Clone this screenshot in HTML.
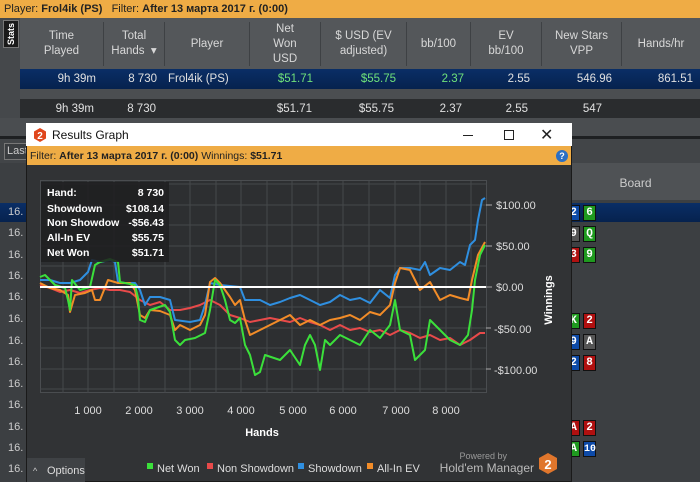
<!DOCTYPE html>
<html><head><meta charset="utf-8"><style>
*{margin:0;padding:0;box-sizing:border-box}
body{width:700px;height:482px;overflow:hidden;background:#3c3f42;font-family:"Liberation Sans","Noto Sans CJK SC",sans-serif;font-size:11px;color:#e0e0e0;position:relative}
.a{position:absolute}
.top{left:0;top:0;width:700px;height:18px;background:#efac45;color:#222;font-size:11px;line-height:18px;padding-left:4px}
.hdr{left:20px;top:18px;width:680px;height:51px;background:#54575a}
.hc{position:absolute;top:4px;height:44px;display:flex;align-items:center;justify-content:center;text-align:center;color:#d8d8d8;font-size:11.5px;line-height:15px;border-right:1px solid #3e4144}
.r1{left:20px;top:69px;width:680px;height:20px;background:linear-gradient(#0a2e66,#06224e);}
.r2{left:20px;top:99px;width:680px;height:19px;background:#2a2c2e}
.c{position:absolute;top:0;line-height:20px;font-size:11.5px;text-align:right}
.g{color:#6fe27a}
.card{position:absolute;width:13px;height:16px;border:1px solid #111;color:#fff;font:bold 11px "Liberation Mono",monospace;text-align:center;line-height:15px}
.left16{position:absolute;left:8px;font-size:11px;color:#ccc}
</style></head><body>
<div class="a top">Player: <b>Frol4ik (PS)</b>&nbsp;&nbsp; Filter: <b>After 13 марта 2017 г. (0:00)</b></div>
<div class="a" style="left:0;top:18px;width:20px;height:120px;background:#45484b"></div>
<div class="a" style="left:3px;top:20px;width:16px;height:28px;background:#1a1a1a;border:1px solid #777;color:#fff;font-size:9px;font-weight:bold;writing-mode:vertical-rl;transform:rotate(180deg);text-align:center;line-height:14px">Stats</div>
<div class="a hdr">
<div class="hc" style="left:0;width:84px">Time<br>Played</div>
<div class="hc" style="left:84px;width:61px">Total<br>Hands &nbsp;▾</div>
<div class="hc" style="left:145px;width:85px">Player</div>
<div class="hc" style="left:230px;width:71px">Net<br>Won<br>USD</div>
<div class="hc" style="left:301px;width:86px">$ USD (EV<br>adjusted)</div>
<div class="hc" style="left:387px;width:64px">bb/100</div>
<div class="hc" style="left:451px;width:71px">EV<br>bb/100</div>
<div class="hc" style="left:522px;width:80px">New Stars<br>VPP</div>
<div class="hc" style="left:602px;width:78px;border:none">Hands/hr</div>
</div>
<div class="a r1">
<span class="c" style="left:0;width:76px">9h 39m</span><span class="c" style="left:84px;width:53px">8 730</span><span class="c" style="left:148px">Frol4ik (PS)</span><span class="c g" style="left:230px;width:63px">$51.71</span><span class="c g" style="left:301px;width:75px">$55.75</span><span class="c g" style="left:387px;width:57px">2.37</span><span class="c" style="left:451px;width:59px">2.55</span><span class="c" style="left:522px;width:70px">546.96</span><span class="c" style="left:602px;width:71px">861.51</span>
</div>
<div class="a" style="left:20px;top:89px;width:680px;height:10px;background:#4b4e51"></div>
<div class="a r2">
<span class="c" style="left:0;width:74px">9h 39m</span><span class="c" style="left:84px;width:52px">8 730</span><span class="c" style="left:230px;width:62px">$51.71</span><span class="c" style="left:301px;width:73px">$55.75</span><span class="c" style="left:387px;width:55px">2.37</span><span class="c" style="left:451px;width:57px">2.55</span><span class="c" style="left:522px;width:60px">547</span>
</div>
<div class="a" style="left:0;top:118px;width:700px;height:18px;background:#4a4d50"></div>
<div class="a" style="left:0;top:136px;width:700px;height:3px;background:#1e2022"></div>
<div class="a" style="left:0;top:139px;width:700px;height:24px;background:#424548"></div>
<div class="a" style="left:4px;top:143px;width:30px;height:17px;border:1px solid #777;background:#3a3d40;color:#ccc;font-size:11px;line-height:15px;padding-left:2px">Last</div>
<div class="a" style="left:571px;top:163px;width:129px;height:37px;background:#4f5255;color:#ccc;font-size:12px;text-align:center;line-height:40px">Board</div>
<div class="a" style="left:0;top:203px;width:700px;height:19px;background:linear-gradient(#0a2e66,#06224e)"></div>
<div class="left16" style="top:206px">16.</div><div class="left16" style="top:227px">16.</div><div class="left16" style="top:249px">16.</div><div class="left16" style="top:270px">16.</div><div class="left16" style="top:291px">16.</div><div class="left16" style="top:313px">16.</div><div class="left16" style="top:335px">16.</div><div class="left16" style="top:356px">16.</div><div class="left16" style="top:378px">16.</div><div class="left16" style="top:399px">16.</div><div class="left16" style="top:421px">16.</div><div class="left16" style="top:442px">16.</div><div class="left16" style="top:463px">16.</div>
<div class="card" style="left:567px;top:205px;background:#0d4aa8">2</div><div class="card" style="left:583px;top:205px;background:#1f9a1f">6</div>
<div class="card" style="left:567px;top:226px;background:#555">9</div><div class="card" style="left:583px;top:226px;background:#1f9a1f">Q</div>
<div class="card" style="left:567px;top:247px;background:#b01010">3</div><div class="card" style="left:583px;top:247px;background:#1f9a1f">9</div>
<div class="card" style="left:567px;top:313px;background:#1f9a1f">K</div><div class="card" style="left:583px;top:313px;background:#b01010">2</div>
<div class="card" style="left:567px;top:334px;background:#0d4aa8">9</div><div class="card" style="left:583px;top:334px;background:#555">A</div>
<div class="card" style="left:567px;top:355px;background:#0d4aa8">2</div><div class="card" style="left:583px;top:355px;background:#b01010">8</div>
<div class="card" style="left:567px;top:420px;background:#b01010">A</div><div class="card" style="left:583px;top:420px;background:#b01010">2</div>
<div class="card" style="left:567px;top:441px;background:#1f9a1f">A</div><div class="card" style="left:583px;top:441px;background:#0d4aa8;font-size:10px">10</div>

<div class="a" style="left:26px;top:123px;width:546px;height:359px;background:#313335;border:1px solid #1a1a1a"></div>
<div class="a" style="left:26px;top:123px;width:546px;height:23px;background:#fff;color:#111;font-size:12px;line-height:24px;padding-left:26px">Results Graph</div>
<svg class="a" style="left:33px;top:128px" width="14" height="14" viewBox="0 0 14 14"><polygon points="7,0 13,3.5 13,10.5 7,14 1,10.5 1,3.5" fill="#e0461c"/><text x="7" y="11" fill="#fff" font-size="10" font-weight="bold" text-anchor="middle" font-family="Liberation Sans">2</text></svg>
<div class="a" style="left:463px;top:135px;width:10px;height:1px;background:#222"></div>
<div class="a" style="left:504px;top:130px;width:10px;height:10px;border:1px solid #222"></div>
<div class="a" style="left:540px;top:125px;color:#222;font-size:16px">✕</div>
<div class="a" style="left:27px;top:146px;width:544px;height:19px;background:#efac45;color:#222;font-size:10.5px;line-height:20px;padding-left:3px">Filter: <b>After 13 марта 2017 г. (0:00)</b> Winnings: <b>$51.71</b></div>
<div class="a" style="left:556px;top:150px;width:12px;height:12px;border-radius:50%;background:#2a6fc4;color:#fff;font-size:9px;font-weight:bold;text-align:center;line-height:12px">?</div>

<svg class="a" style="left:27px;top:165px" width="544" height="317" font-family="Liberation Sans">
<g stroke="#45484b" stroke-width="1">
<rect x="13.5" y="15.5" width="446" height="212" fill="#2d2f31" stroke="#4a4d50"/>
<path d="M13 19H459M13 40H459M13 60H459M13 81H459M13 101H459M13 122H459M13 142H459M13 163H459M13 183H459M13 204H459M13 224H459"/>
<path d="M36 16V228M61 16V228M87 16V228M112 16V228M138 16V228M163 16V228M189 16V228M214 16V228M240 16V228M265 16V228M291 16V228M316 16V228M342 16V228M368 16V228M393 16V228M419 16V228M444 16V228"/>
</g>
<g fill="#ddd" font-size="11">
<text x="469" y="44">$100.00</text><text x="469" y="85">$50.00</text><text x="469" y="126">$0.00</text><text x="467" y="168">-$50.00</text><text x="467" y="209">-$100.00</text>
<text x="61" y="249" text-anchor="middle">1 000</text><text x="112" y="249" text-anchor="middle">2 000</text><text x="163" y="249" text-anchor="middle">3 000</text><text x="214" y="249" text-anchor="middle">4 000</text><text x="266" y="249" text-anchor="middle">5 000</text><text x="316" y="249" text-anchor="middle">6 000</text><text x="369" y="249" text-anchor="middle">7 000</text><text x="419" y="249" text-anchor="middle">8 000</text>
</g>
<path d="M459 40H465M459 81H465M459 122H465M459 163H464M459 204H464" stroke="#aaa"/>
<text x="235" y="271" fill="#fff" font-size="11" font-weight="bold" text-anchor="middle">Hands</text>
<text transform="translate(525,135) rotate(-90)" fill="#fff" font-size="11" font-weight="bold" text-anchor="middle">Winnings</text>
<g transform="translate(-27,-165)" fill="none" stroke-width="2" stroke-linejoin="round">
<polyline stroke="#e84a4a" points="40,285 50,288 60,292 70,290 80,293 90,290 100,288 110,290 120,290 130,292 140,300 150,305 160,302 170,310 180,310 190,308 200,305 210,300 220,305 230,315 240,318 250,322 260,320 270,318 280,320 290,322 300,318 310,322 320,325 330,330 340,325 350,330 360,328 370,332 380,330 390,335 400,330 410,333 420,338 430,335 440,340 450,338 460,345 470,340 480,333 485,333"/>
<polyline stroke="#2f8fe0" points="40,280 50,280 60,283 70,283 80,280 88,272 92,260 100,262 110,260 115,262 118,282 125,283 135,283 140,290 145,305 150,297 160,297 170,300 175,320 190,322 200,320 205,305 210,283 220,285 240,287 245,300 255,300 260,300 270,305 280,302 290,298 300,295 310,300 320,305 330,302 340,295 350,300 360,298 370,303 380,290 390,298 395,275 400,268 410,268 420,270 425,262 430,275 440,268 450,270 460,262 465,265 470,245 475,240 478,220 482,200 485,198"/>
<polyline stroke="#f28c28" points="40,283 50,288 60,290 68,295 70,312 75,295 85,293 92,290 95,300 100,300 108,280 118,283 130,283 135,290 140,315 145,318 150,310 160,311 170,315 175,330 180,325 190,330 200,325 205,315 210,282 215,278 220,283 230,297 235,305 240,300 245,320 250,335 260,330 270,325 280,320 290,315 300,325 310,320 320,325 330,320 340,318 350,315 360,320 370,312 380,315 390,305 395,283 400,268 410,270 420,290 430,282 440,300 450,295 460,298 468,300 472,280 478,255 485,242"/>
<polyline stroke="#3be03b" points="40,277 45,275 55,285 65,288 68,300 70,310 72,280 80,290 90,287 95,265 100,262 110,259 118,262 120,282 135,285 138,298 140,320 145,322 150,310 165,305 170,312 175,340 180,345 185,340 195,338 205,333 210,310 215,280 220,285 225,300 230,320 235,323 240,318 245,345 250,355 255,375 260,372 265,355 280,360 290,350 300,365 305,345 310,335 315,345 320,370 325,340 330,345 340,335 350,340 360,345 370,330 380,338 390,325 395,300 400,330 410,335 415,360 425,350 430,320 440,330 450,340 460,345 468,335 472,310 475,280 480,255 485,245"/>
<path d="M40 287H486" stroke="#fff" stroke-width="2"/>
</g>
<rect x="14" y="17" width="128" height="80" fill="#1e1f20" opacity="0.85"/>
<g fill="#fff" font-size="10.5" font-weight="bold">
<text x="20" y="31">Hand:</text><text x="137" y="31" text-anchor="end">8 730</text>
<text x="20" y="47">Showdown</text><text x="137" y="47" text-anchor="end">$108.14</text>
<text x="20" y="61">Non Showdow</text><text x="137" y="61" text-anchor="end">-$56.43</text>
<text x="20" y="76">All-In EV</text><text x="137" y="76" text-anchor="end">$55.75</text>
<text x="20" y="91">Net Won</text><text x="137" y="91" text-anchor="end">$51.71</text>
</g>
<g font-size="11" fill="#ddd">
<rect x="120" y="298" width="6" height="6" fill="#3be03b"/><text x="130" y="307">Net Won</text>
<rect x="180" y="298" width="6" height="6" fill="#e84a4a"/><text x="190" y="307">Non Showdown</text>
<rect x="271" y="298" width="6" height="6" fill="#2f8fe0"/><text x="281" y="307">Showdown</text>
<rect x="340" y="298" width="6" height="6" fill="#f28c28"/><text x="350" y="307">All-In EV</text>
<text x="480" y="294" font-size="9" fill="#999" text-anchor="end">Powered by</text>
<text x="507" y="307" font-size="12" fill="#bbb" text-anchor="end">Hold'em Manager</text>
</g>
<polygon points="521,288 530,293 530,304 521,309 512,304 512,293" fill="#e0762c"/>
<text x="521" y="304" fill="#fff" font-size="13" font-weight="bold" text-anchor="middle">2</text>
<rect x="0" y="293" width="58" height="24" fill="#3f4245"/>
<text x="6" y="309" fill="#ccc" font-size="9">^</text><text x="20" y="309" fill="#ddd" font-size="11">Options</text>
</svg>
</body></html>
